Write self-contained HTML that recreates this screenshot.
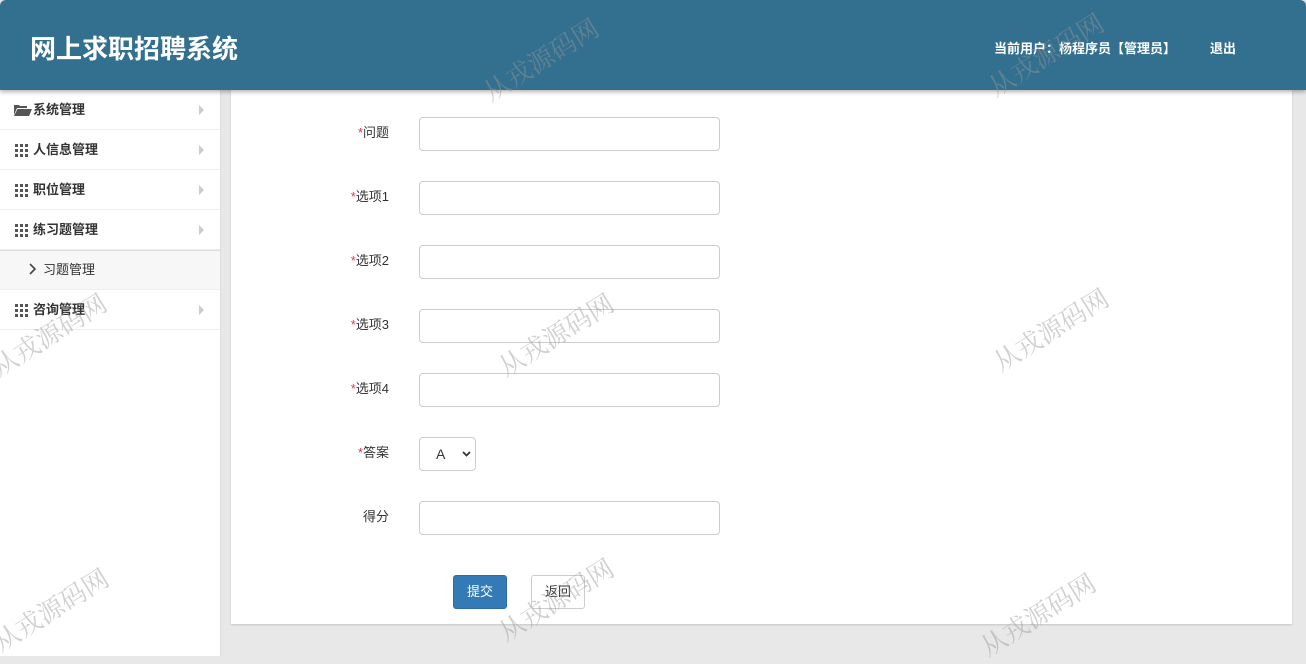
<!DOCTYPE html>
<html><head><meta charset="utf-8"><style>
*{margin:0;padding:0;box-sizing:border-box}
body{width:1306px;height:656px;overflow:hidden;background:#e8e8e8;font-family:"Liberation Sans","Noto Sans CJK SC",sans-serif;font-size:13px;color:#333;position:relative}
.hd{position:absolute;left:0;top:0;width:1306px;height:90px;background:#33708f;border-radius:6px 6px 0 0;box-shadow:0 2px 4px rgba(0,0,0,.3);z-index:2}
.hd h1{position:absolute;left:30px;top:29px;font-size:26px;color:#fff;font-weight:bold}
.hd .u{position:absolute;left:994px;top:38px;color:#fff;font-size:13px;font-weight:bold}
.hd .o{position:absolute;left:1210px;top:38px;color:#fff;font-size:13px;font-weight:bold}
.sb{position:absolute;left:0;top:90px;width:221px;height:566px;background:#fff;border-right:1px solid #ddd}
.it{height:40px;border-bottom:1px solid #eee;position:relative;font-size:13px;line-height:40px;padding-left:33px;color:#333;font-weight:bold}
.it .gr{position:absolute;left:15px;top:14px;width:13px;height:12px;display:grid;grid-template-columns:repeat(3,3px);gap:2px 2px}
.it .gr i{width:3px;height:3px;background:#555;display:block}
.it .ar{position:absolute;left:199px;top:15px;width:0;height:0;border-left:5px solid #ccc;border-top:5px solid transparent;border-bottom:5px solid transparent}
.sub{height:40px;background:#f7f7f7;border-bottom:1px solid #eee;border-top:1px solid #ddd;line-height:38px;padding-left:43px}
.pn{position:absolute;left:231px;top:90px;width:1061px;height:534px;background:#fff;box-shadow:0 1px 2px rgba(0,0,0,.15)}
.row{position:absolute;left:0;width:800px}
.lb{position:absolute;right:642px;top:-1px;font-size:13px;line-height:34px;white-space:nowrap}
.lb b{color:#e33;font-weight:normal}
.in{position:absolute;left:188px;top:0;width:301px;height:34px;border:1px solid #ccc;border-radius:4px}
.sel{position:absolute;left:188px;top:0;width:57px;height:34px;border:1px solid #ccc;border-radius:4px;font-size:14px;line-height:32px;padding-left:16px}
.btn{position:absolute;top:485px;height:34px;border-radius:3px;font-size:13px;line-height:32px;text-align:center}
.wm{position:absolute;color:rgba(150,150,150,.45);font-size:26px;transform:rotate(-32deg);transform-origin:left bottom;white-space:nowrap;z-index:5;font-family:"Noto Serif CJK SC",serif}
</style></head><body>
<div class="hd"><h1>网上求职招聘系统</h1><div class="u">当前用户：杨程序员【管理员】</div><div class="o">退出</div></div>
<div class="sb">
<div class="it"><svg style="position:absolute;left:14px;top:14px" width="18" height="12" viewBox="0 0 18 12"><path d="M0 1h5l1 1h7v2H3L0 11z" fill="#555"/><path d="M3.5 5H18l-3 7H0z" fill="#555"/></svg>系统管理<span class="ar"></span></div>
<div class="it"><span class="gr"><i></i><i></i><i></i><i></i><i></i><i></i><i></i><i></i><i></i></span>人信息管理<span class="ar"></span></div>
<div class="it"><span class="gr"><i></i><i></i><i></i><i></i><i></i><i></i><i></i><i></i><i></i></span>职位管理<span class="ar"></span></div>
<div class="it"><span class="gr"><i></i><i></i><i></i><i></i><i></i><i></i><i></i><i></i><i></i></span>练习题管理<span class="ar"></span></div>
<div class="sub"><svg style="position:absolute;left:29px;top:173px" width="8" height="12" viewBox="0 0 8 12"><path d="M1 1l5 5-5 5" stroke="#444" stroke-width="1.6" fill="none"/></svg>习题管理</div>
<div class="it"><span class="gr"><i></i><i></i><i></i><i></i><i></i><i></i><i></i><i></i><i></i></span>咨询管理<span class="ar"></span></div>
</div>
<div class="pn">
<div class="row" style="top:27px"><span class="lb"><b>*</b>问题</span><span class="in"></span></div>
<div class="row" style="top:91px"><span class="lb"><b>*</b>选项1</span><span class="in"></span></div>
<div class="row" style="top:155px"><span class="lb"><b>*</b>选项2</span><span class="in"></span></div>
<div class="row" style="top:219px"><span class="lb"><b>*</b>选项3</span><span class="in"></span></div>
<div class="row" style="top:283px"><span class="lb"><b>*</b>选项4</span><span class="in"></span></div>
<div class="row" style="top:347px"><span class="lb"><b>*</b>答案</span><span class="sel">A<svg style="position:absolute;left:42px;top:13px" width="9" height="6" viewBox="0 0 9 6"><path d="M1 1l3.5 3.5L8 1" stroke="#333" stroke-width="1.8" fill="none"/></svg></span></div>
<div class="row" style="top:411px"><span class="lb">得分</span><span class="in"></span></div>
<div class="btn" style="left:222px;width:54px;background:#337ab7;color:#fff;border:1px solid #2e6da4">提交</div>
<div class="btn" style="left:300px;width:54px;background:#fff;border:1px solid #ccc;color:#333">返回</div>
</div>
<div class="wm" style="left:495px;top:72px">从戎源码网</div>
<div class="wm" style="left:1000px;top:67px">从戎源码网</div>
<div class="wm" style="left:3px;top:347px">从戎源码网</div>
<div class="wm" style="left:510px;top:347px">从戎源码网</div>
<div class="wm" style="left:1005px;top:342px">从戎源码网</div>
<div class="wm" style="left:5px;top:622px">从戎源码网</div>
<div class="wm" style="left:510px;top:612px">从戎源码网</div>
<div class="wm" style="left:992px;top:627px">从戎源码网</div>
</body></html>
